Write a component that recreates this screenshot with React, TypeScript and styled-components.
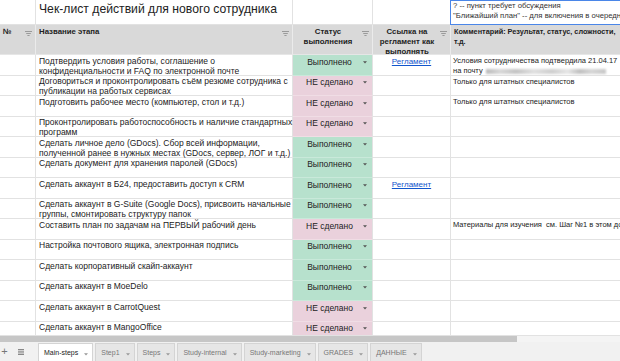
import React from "react";
import styled, { createGlobalStyle } from "styled-components";

const Global = createGlobalStyle`
  html, body { margin: 0; padding: 0; background: #fff; }
  body { font-family: "Liberation Sans", Arial, sans-serif; color: #222; }
`;

const Screen = styled.div`
  width: 620px;
  height: 361px;
  overflow: hidden;
  display: flex;
  flex-direction: column;
  background: #fff;
`;

const SheetArea = styled.div`
  flex: 1;
  min-height: 0;
  overflow: hidden;
`;

const Grid = styled.div`
  display: grid;
  grid-template-columns: 36px 257px 80px 78px 180px;
  grid-template-rows: 25px 30px;
  grid-auto-rows: 20.5px;
  width: 631px;
  font-size: 8.5px;
  line-height: 10px;
`;

const Cell = styled.div`
  box-sizing: border-box;
  border-right: 1px solid #e2e2e2;
  border-bottom: 1px solid #e2e2e2;
  min-width: 0;
`;

const TitleCell = styled(Cell)`
  font-size: 12.2px;
  line-height: 16px;
  padding: 1px 3px 0;
  color: #222;
  white-space: nowrap;
  overflow: hidden;
`;

const NoteCell = styled(Cell)`
  font-size: 7.7px;
  line-height: 10px;
  padding: 0 2px;
  color: #333;
  white-space: pre;
  overflow: hidden;
  border: 1px solid #4a86e8;
  border-right: none;
  margin-left: -1px;
`;

const HeadCell = styled(Cell)<{ $small?: boolean }>`
  position: relative;
  z-index: 1;
  background: #d9d9d9;
  border-right-color: #ebebeb;
  border-bottom-color: #e6e6e6;
  display: flex;
  align-items: flex-start;
  padding: 2px 3px 0;
  font-size: ${(p) => (p.$small ? "7.3px" : "7.8px")};
  line-height: 10px;
  font-weight: bold;
  color: #222;
`;

const HeadText = styled.div<{ $align?: "left" | "center" }>`
  flex: 1;
  min-width: 0;
  white-space: pre;
  text-align: ${(p) => p.$align || "left"};
`;

const FilterIcon = styled.svg`
  flex: none;
  width: 7px;
  height: 5px;
  margin-top: 3.5px;
  margin-left: 2px;
`;

const Funnel = () => (
  <FilterIcon viewBox="0 0 7 5">
    <rect x="0" y="0" width="7" height="1" fill="#9a9a9a" />
    <rect x="1.2" y="2" width="4.6" height="1" fill="#9a9a9a" />
    <rect x="2.4" y="4" width="2.2" height="1" fill="#9a9a9a" />
  </FilterIcon>
);

const TextCell = styled(Cell)`
  padding: 0.5px 3px 0;
  white-space: pre;
  color: #222;
`;

const StatusCell = styled(Cell)<{ $done: boolean }>`
  background: ${(p) => (p.$done ? "#b7e1cd" : "#ead1dc")};
  border-bottom-color: ${(p) => (p.$done ? "#c9e9da" : "#f0dde5")};
  border-right-color: #e2e2e2;
  display: flex;
  align-items: flex-start;
  padding: 1.5px 5px 0 5px;
  color: #222;
`;

const StatusText = styled.span`
  flex: 1;
  text-align: center;
  white-space: nowrap;
`;

const Caret = styled.svg`
  flex: none;
  width: 4px;
  height: 3px;
  margin-top: 4px;
  margin-left: 2px;
`;

const DownCaret = ({ color = "#555" }: { color?: string }) => (
  <Caret viewBox="0 0 4 3">
    <path d="M0 0.2 L4 0.2 L2 2.6 Z" fill={color} />
  </Caret>
);

const LinkCell = styled(Cell)`
  padding: 1.5px 2px 0;
  text-align: center;
  font-size: 8px;
`;

const Link = styled.a`
  color: #1155cc;
  text-decoration: underline;
`;

const CommentCell = styled(Cell)`
  padding: 1px 2px 0;
  white-space: pre;
  color: #222;
  font-size: 7.5px;
  overflow: hidden;
`;

const Blur = styled.span`
  display: inline-block;
  width: 120px;
  height: 5px;
  vertical-align: -1px;
  margin-left: 3px;
  background: linear-gradient(
    90deg,
    #bbb 0%,
    #d8d8d8 12%,
    #c4c4c4 25%,
    #e0e0e0 40%,
    #cfcfcf 55%,
    #e6e6e6 68%,
    #c0c0c0 78%,
    #d6d6d6 88%,
    #c8c8c8 100%
  );
  filter: blur(1px);
`;

const HScroll = styled.div`
  flex: none;
  height: 6px;
  background: #f4f4f4;
  border-top: 1px solid #e2e2e2;
  display: flex;
`;

const Thumb = styled.div`
  width: 517px;
  background: #c6c6c6;
`;

const TabBar = styled.div`
  flex: none;
  height: 19px;
  background: #f1f1f1;
  display: flex;
  align-items: flex-end;
  font-size: 7px;
`;

const TabTools = styled.div`
  display: flex;
  gap: 7px;
  height: 19px;
  align-items: center;
`;

const TabTool = styled.div`
  width: 9px;
  height: 19px;
  display: flex;
  align-items: center;
  justify-content: center;
  color: #777;
`;

const PlusText = styled.span`
  font-size: 11px;
  line-height: 11px;
`;

const Tabs = styled.div`
  display: flex;
  align-items: flex-end;
  gap: 2px;
  margin-left: 13px;
`;

const Tab = styled.div<{ $active?: boolean }>`
  height: 18px;
  box-sizing: border-box;
  display: flex;
  align-items: center;
  padding: 0 4px 0 5px;
  border: 1px solid #d4d4d4;
  border-bottom: none;
  background: ${(p) => (p.$active ? "#fff" : "#e6e6e6")};
  color: ${(p) => (p.$active ? "#222" : "#777")};
  white-space: nowrap;
`;

const TabCaret = styled.span`
  margin-left: 4px;
  display: inline-flex;
`;

type Row = {
  name: string;
  done: boolean;
  link?: boolean;
  comment?: React.ReactNode;
};

const rows: Row[] = [
  {
    name: "Подтвердить условия работы, соглашение о\nконфиденциальности и FAQ по электронной почте",
    done: true,
    link: true,
    comment: (
      <>
        {"Условия сотрудничества подтвердила 21.04.17\nна почту"}
        <Blur />
      </>
    ),
  },
  {
    name: "Договориться и проконтролировать съём резюме сотрудника с\nпубликации на работых сервисах",
    done: false,
    comment: "Только для штатных специалистов",
  },
  {
    name: "Подготовить рабочее место (компьютер, стол и т.д.)",
    done: false,
    comment: "Только для штатных специалистов",
  },
  {
    name: "Проконтролировать работоспособность и наличие стандартных\nпрограмм",
    done: false,
  },
  {
    name: "Сделать личное дело (GDocs). Сбор всей информации,\nполученной ранее в нужных местах (GDocs, сервер, ЛОГ и т.д.)",
    done: true,
  },
  { name: "Сделать документ для хранения паролей (GDocs)", done: true },
  { name: "Сделать аккаунт в Б24, предоставить доступ к CRM", done: true, link: true },
  {
    name: "Сделать аккаунт в G-Suite (Google Docs), присвоить начальные\nгруппы, смонтировать структуру папок",
    done: true,
  },
  {
    name: "Составить план по задачам на ПЕРВЫЙ рабочий день",
    done: false,
    comment: "Материалы для изучения  см. Шаг №1 в этом документе",
  },
  { name: "Настройка почтового ящика, электронная подпись", done: true },
  { name: "Сделать корпоративный скайп-аккаунт", done: true },
  { name: "Сделать аккаунт в MoeDelo", done: true },
  { name: "Сделать аккаунт в CarrotQuest", done: false },
  { name: "Сделать аккаунт в MangoOffice", done: false },
];

const tabs = [
  "Main-steps",
  "Step1",
  "Steps",
  "Study-internal",
  "Study-marketing",
  "GRADES",
  "ДАННЫЕ",
];

const ListIcon = () => (
  <svg width="6" height="6" viewBox="0 0 6 6">
    <rect x="0" y="0" width="6" height="1" fill="#888" />
    <rect x="0" y="1.7" width="6" height="1" fill="#888" />
    <rect x="0" y="3.4" width="6" height="1" fill="#888" />
    <rect x="0" y="5" width="6" height="1" fill="#888" />
  </svg>
);

export default function App() {
  return (
    <Screen>
      <Global />
      <SheetArea>
        <Grid>
          <Cell />
          <TitleCell>Чек-лист действий для нового сотрудника</TitleCell>
          <Cell />
          <Cell />
          <NoteCell>
            {"? -- пункт требует обсуждения\n\"Ближайший план\" -- для включения в очередной план"}
          </NoteCell>

          <HeadCell>
            <HeadText>№</HeadText>
            <Funnel />
          </HeadCell>
          <HeadCell>
            <HeadText>Название этапа</HeadText>
            <Funnel />
          </HeadCell>
          <HeadCell>
            <HeadText $align="center">{"Статус\nвыполнения"}</HeadText>
            <Funnel />
          </HeadCell>
          <HeadCell>
            <HeadText $align="center">{"Ссылка на\nрегламент как\nвыполнять"}</HeadText>
            <Funnel />
          </HeadCell>
          <HeadCell $small>
            <HeadText>{"Комментарий: Результат, статус, сложности,\nт.д."}</HeadText>
          </HeadCell>

          {rows.map((r, i) => (
            <React.Fragment key={i}>
              <Cell />
              <TextCell>{r.name}</TextCell>
              <StatusCell $done={r.done}>
                <StatusText>{r.done ? "Выполнено" : "НЕ сделано"}</StatusText>
                <DownCaret />
              </StatusCell>
              <LinkCell>{r.link ? <Link href="#">Регламент</Link> : null}</LinkCell>
              <CommentCell>{r.comment}</CommentCell>
            </React.Fragment>
          ))}
        </Grid>
      </SheetArea>
      <HScroll>
        <Thumb />
      </HScroll>
      <TabBar>
        <TabTools>
          <TabTool>
            <PlusText>+</PlusText>
          </TabTool>
          <TabTool>
            <ListIcon />
          </TabTool>
        </TabTools>
        <Tabs>
          {tabs.map((t, i) => (
            <Tab key={t} $active={i === 0}>
              {t}
              <TabCaret>
                <DownCaret color="#999" />
              </TabCaret>
            </Tab>
          ))}
        </Tabs>
      </TabBar>
    </Screen>
  );
}
